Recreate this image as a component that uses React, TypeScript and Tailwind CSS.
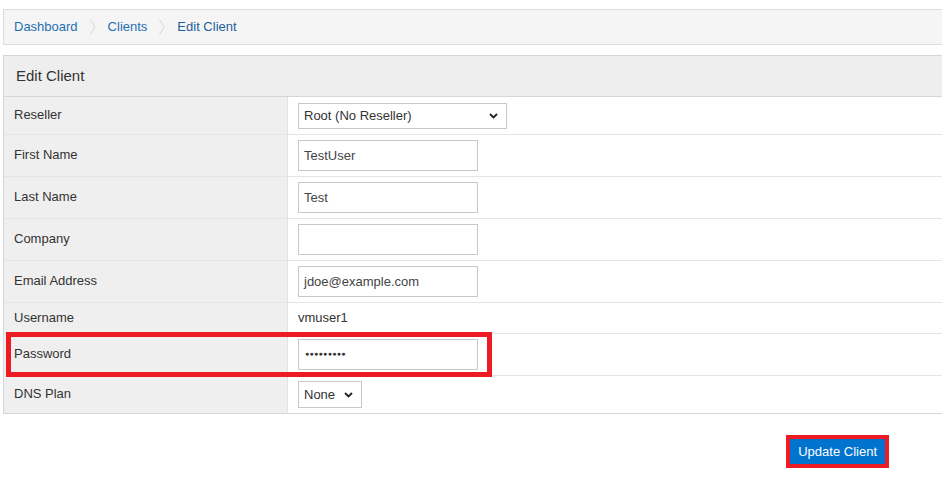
import React from "react";

function Chevron() {
  return (
    <svg width="6" height="16" viewBox="0 0 6 16" className="mx-[12px] shrink-0">
      <path d="M0.5 0.5 L5 8 L0.5 15.5" fill="none" stroke="#d6d6d6" strokeWidth="1" />
    </svg>
  );
}

function SelectBox({ value, width }: { value: string; width: string }) {
  return (
    <div className={`flex items-center justify-between border border-[#c8c8c8] bg-white pl-[5px] pr-[8px] ${width}`}>
      <span className="text-[13px] text-[#333]">{value}</span>
      <svg width="9" height="6" viewBox="0 0 9 6">
        <path d="M1 1 L4.5 4.5 L8 1" fill="none" stroke="#222" strokeWidth="1.8" />
      </svg>
    </div>
  );
}

function TextBox({ value }: { value: string }) {
  return (
    <div className="flex h-[31px] w-[180px] items-center border border-[#c8c8c8] bg-white pl-[5px] text-[13px] text-[#444]">
      {value}
    </div>
  );
}

type Row = { label: string; h: string; last?: boolean; value: React.ReactNode };

export default function App() {
  const rows: Row[] = [
    { label: "Reseller", h: "h-[38px]", value: <SelectBox value="Root (No Reseller)" width="h-[26px] w-[209px]" /> },
    { label: "First Name", h: "h-[42px]", value: <TextBox value="TestUser" /> },
    { label: "Last Name", h: "h-[42px]", value: <TextBox value="Test" /> },
    { label: "Company", h: "h-[42px]", value: <TextBox value="" /> },
    { label: "Email Address", h: "h-[42px]", value: <TextBox value="jdoe@example.com" /> },
    { label: "Username", h: "h-[31px]", value: <span className="text-[13px] text-[#333]">vmuser1</span> },
    {
      label: "Password",
      h: "h-[42px]",
      value: (
        <div className="flex h-[31px] w-[180px] items-center border border-[#c8c8c8] bg-white pl-[6px] text-[7px] tracking-[0.3px] text-[#333]">
          ●●●●●●●●●
        </div>
      ),
    },
    { label: "DNS Plan", h: "h-[37px]", last: true, value: <SelectBox value="None" width="h-[27px] w-[64px]" /> },
  ];

  return (
    <div className="relative h-[489px] w-[942px] overflow-hidden bg-white font-['Liberation_Sans',Arial,sans-serif] text-[13px] text-[#333]">
      <div className="pl-[3px] pt-[9px]">
        {/* Breadcrumb */}
        <div className="flex h-[36px] w-[980px] items-center border border-[#ddd] bg-[#f5f5f5] pl-[10px]">
          <span className="text-[#1f6fb2]">Dashboard</span>
          <Chevron />
          <span className="text-[#1f6fb2]">Clients</span>
          <Chevron />
          <span className="text-[#1d5f98]">Edit Client</span>
        </div>

        {/* Panel */}
        <div className="mt-[10px] w-[980px] border border-[#d6d6d6]">
          <div className="flex h-[41px] items-center border-b border-[#d6d6d6] bg-[#eee] pl-[12px] text-[15px] text-[#333]">
            Edit Client
          </div>
          {rows.map((r) => (
            <div key={r.label} className={`flex ${r.h} ${r.last ? "" : "border-b border-[#e4e4e4]"}`}>
              <div className="flex w-[284px] shrink-0 items-center border-r border-[#e4e4e4] bg-[#efefef] pb-[1px] pl-[10px]">
                {r.label}
              </div>
              <div className="flex flex-1 items-center pl-[10px]">{r.value}</div>
            </div>
          ))}
        </div>

        {/* Actions */}
        <div className="mt-[21px] flex w-[886px] justify-end">
          <div className="border-4 border-[#ed1c24]">
            <button className="h-[25px] bg-[#0073cf] px-[8px] text-[13px] text-white">Update Client</button>
          </div>
        </div>
      </div>

      {/* Annotation highlight */}
      <div className="pointer-events-none absolute left-[6px] top-[332px] h-[45px] w-[486px] border-[5px] border-[#ed1c24]" />
    </div>
  );
}
